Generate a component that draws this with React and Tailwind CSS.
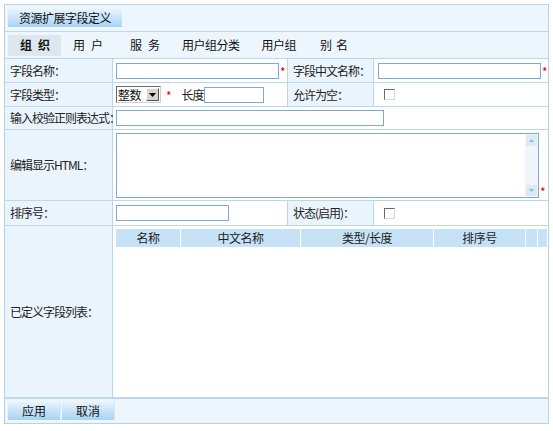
import React from "react";

const font = { fontFamily: '"Noto Sans CJK SC", "Liberation Sans", sans-serif' };

function Star({ className = "" }) {
  return <span className={"text-[#e00000] text-[12px] leading-none " + className}>*</span>;
}

function Checkbox() {
  return (
    <span className="inline-block w-[11px] h-[11px] border border-t-[#6b6b6b] border-l-[#6b6b6b] border-r-[#d8d8d8] border-b-[#d8d8d8] bg-white" />
  );
}

function Btn({ children, w = "w-[53px]" }) {
  return (
    <div className={`${w} h-[18px] flex items-center justify-center text-[12px] text-[#111] bg-gradient-to-b from-[#e6f3fd] to-[#a7d2f3] border-r border-[#d6e9f8]`}>
      {children}
    </div>
  );
}

const label = "bg-[#eaf4fc] border-r border-b border-[#bcd6ea] flex items-center pl-[5px] text-[12px] tracking-[-1px] whitespace-nowrap text-[#222]";
const cell = "bg-white border-r border-b border-[#bcd6ea] flex items-center pl-[3px]";
const input = "h-[16px] border border-[#7ea9d0] bg-white";

export default function App() {
  return (
    <div className="w-[553px] h-[431px] bg-white pt-[4px] pl-[4px]" style={font}>
      <div className="w-[545px] border border-[#b7d1e6] bg-[#eef6fd]">
        {/* title */}
        <div className="h-[27px] flex items-center pl-[3px] border-b border-[#c0d6e8]">
          <div className="w-[114px] h-[18px] flex items-center justify-center text-[12px] tracking-[-0.5px] text-[#111] bg-gradient-to-b from-[#e8f4fd] to-[#a8d3f4]">
            资源扩展字段定义
          </div>
        </div>
        {/* tabs */}
        <div className="h-[27px] flex items-center pl-[3px] text-[12px] text-[#111] border-b border-[#bcd6ea] whitespace-nowrap">
          <div className="w-[53px] h-[21px] bg-[#dde7ef] flex items-center pl-[12px] font-bold tracking-[6px]">组织</div>
          <div className="ml-[12px] tracking-[6px]">用户</div>
          <div className="ml-[21px] tracking-[6px]">服务</div>
          <div className="ml-[16px] tracking-[-0.5px]">用户组分类</div>
          <div className="ml-[22px] tracking-[-0.5px]">用户组</div>
          <div className="ml-[24px] tracking-[4px]">别名</div>
        </div>
        {/* form */}
        <div className="grid grid-cols-[108px_175px_86px_1fr] bg-white">
          {/* row 1 */}
          <div className={label + " h-[24px]"}>字段名称：</div>
          <div className={cell + " h-[24px]"}>
            <div className={input + " w-[163px]"} />
            <Star className="ml-[1px] mt-[3px]" />
          </div>
          <div className={label + " h-[24px] pl-[3px]"}>字段中文名称：</div>
          <div className={cell + " h-[24px] border-r-0 pl-[4px]"}>
            <div className={input + " w-[163px]"} />
            <Star className="ml-[1px] mt-[3px]" />
          </div>
          {/* row 2 */}
          <div className={label + " h-[24px]"}>字段类型：</div>
          <div className={cell + " h-[24px]"}>
            <div className="h-[17px] w-[45px] border border-t-[#6b6b6b] border-l-[#6b6b6b] border-r-[#cfcfcf] border-b-[#cfcfcf] bg-white flex items-center">
              <span className="text-[12px] leading-none pl-[1px] tracking-[-0.5px] text-[#111]">整数</span>
              <span className="ml-auto mr-[1px] w-[13px] h-[13px] bg-[#d6d3ce] border border-t-white border-l-white border-r-[#555] border-b-[#555] flex items-center justify-center">
                <svg width="7" height="4" viewBox="0 0 7 4"><path d="M0 0h7L3.5 4z" fill="#000" /></svg>
              </span>
            </div>
            <Star className="ml-[5px] mt-[3px]" />
            <span className="ml-[10px] text-[12px] tracking-[-1px] text-[#222]">长度</span>
            <div className={input + " w-[60px]"} />
          </div>
          <div className={label + " h-[24px] pl-[3px]"}>允许为空：</div>
          <div className={cell + " h-[24px] border-r-0 pl-[10px]"}>
            <Checkbox />
          </div>
          {/* row 3 */}
          <div className={label + " h-[23px]"}>输入校验正则表达式：</div>
          <div className={cell + " h-[23px] col-span-3 border-r-0"}>
            <div className={input + " w-[268px]"} />
          </div>
          {/* row 4 */}
          <div className={label + " h-[71px]"}>编辑显示HTML：</div>
          <div className={cell + " h-[71px] col-span-3 border-r-0 items-start pt-[3px]"}>
            <div className="w-[423px] h-[65px] border border-[#7ea9d0] bg-white flex justify-end">
              <div className="w-[13px] bg-[#f0f6fc] flex flex-col justify-between items-center py-[1px]">
                <div className="w-[11px] h-[11px] bg-[#dceaf6] flex items-center justify-center">
                  <svg width="5" height="3" viewBox="0 0 5 3"><path d="M0 3h5L2.5 0z" fill="#9bb7d0" /></svg>
                </div>
                <div className="w-[11px] h-[11px] bg-[#dceaf6] flex items-center justify-center">
                  <svg width="5" height="3" viewBox="0 0 5 3"><path d="M0 0h5L2.5 3z" fill="#9bb7d0" /></svg>
                </div>
              </div>
            </div>
            <Star className="ml-[1px] self-end mb-[2px]" />
          </div>
          {/* row 5 */}
          <div className={label + " h-[25px]"}>排序号：</div>
          <div className={cell + " h-[25px]"}>
            <div className={input + " w-[113px]"} />
          </div>
          <div className={label + " h-[25px] pl-[3px]"}>状态(启用)：</div>
          <div className={cell + " h-[25px] border-r-0 pl-[10px]"}>
            <Checkbox />
          </div>
          {/* row 6 */}
          <div className={label + " h-[172px]"}>已定义字段列表：</div>
          <div className={cell + " h-[172px] col-span-3 border-r-0 items-start pt-[3px]"}>
            <div className="w-[431px] h-[18px] grid grid-cols-[64px_119px_132px_91px_11px_1fr] gap-[1px] bg-white text-[12px] tracking-[-0.5px] text-[#222]">
              <div className="bg-[#c6e2f7] flex items-center justify-center">名称</div>
              <div className="bg-[#c6e2f7] flex items-center justify-center">中文名称</div>
              <div className="bg-[#c6e2f7] flex items-center justify-center">类型/长度</div>
              <div className="bg-[#c6e2f7] flex items-center justify-center">排序号</div>
              <div className="bg-[#c6e2f7]" />
              <div className="bg-[#c6e2f7]" />
            </div>
          </div>
        </div>
        {/* footer */}
        <div className="h-[25px] flex items-center pl-[3px] gap-[1px] border-t border-[#bcd6ea]">
          <Btn>应用</Btn>
          <Btn>取消</Btn>
        </div>
      </div>
    </div>
  );
}
